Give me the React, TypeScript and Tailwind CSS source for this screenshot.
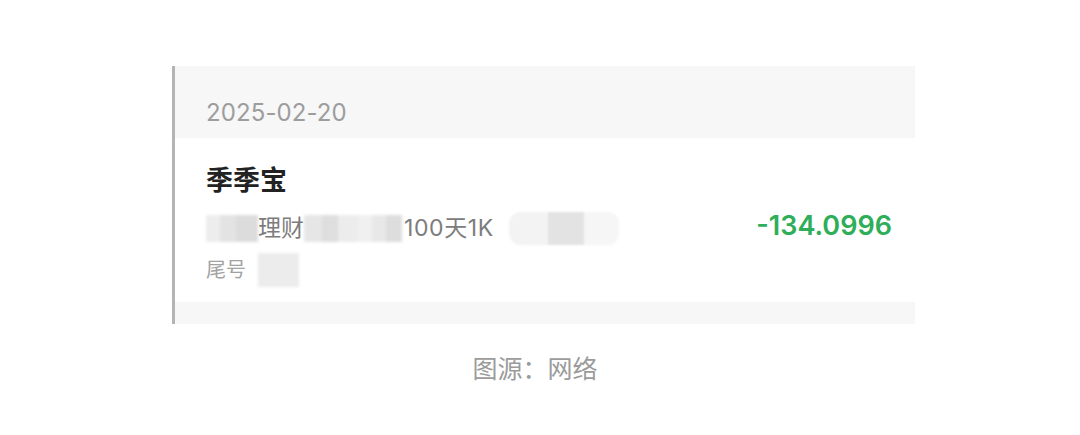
import React from 'react';

const font = { fontFamily: 'Inter, "Noto Sans CJK SC", sans-serif' };

// mosaic patches standing in for the blurred-out parts of the record
const Mosaic = ({ cells, h }: { cells: { w: number; c: string }[]; h: number }) => (
  <div className="flex blur-[1.5px]" style={{ height: h }}>
    {cells.map((cell, i) => (
      <div key={i} style={{ width: cell.w, background: cell.c }} />
    ))}
  </div>
);

export default function App() {
  return (
    <div className="w-[1080px] h-[435px] bg-white pt-[66px]" style={font}>
      <div className="ml-[172px] w-[743px] border-l-[3px] border-[#b4b4b4]">
        <div className="h-[72px] bg-[#f7f7f7] pl-[31px] flex items-center pt-[22px]">
          <span className="text-[24px] text-[#9d9d9d] tracking-[0.1px]">2025-02-20</span>
        </div>

        <div className="h-[164px] bg-white pl-[31px] pr-[23px] pt-[26px] flex">
          <div className="flex-1 flex flex-col">
            <div className="text-[27px] leading-[34px] font-bold text-[#222]">季季宝</div>
            <div className="flex items-center mt-[13px] h-[34px] text-[23px] text-[#7c7c7c]">
              <Mosaic
                h={27}
                cells={[
                  { w: 14, c: '#ededed' },
                  { w: 16, c: '#e3e3e3' },
                  { w: 22, c: '#dcdcdc' },
                ]}
              />
              <span>理财</span>
              <Mosaic
                h={27}
                cells={[
                  { w: 18, c: '#e6e6e6' },
                  { w: 16, c: '#dedede' },
                  { w: 20, c: '#ececec' },
                  { w: 14, c: '#f0f0f0' },
                  { w: 14, c: '#e8e8e8' },
                  { w: 16, c: '#dddddd' },
                ]}
              />
              <span className="ml-[2px] tracking-[0.6px]">100天1K</span>
              <div className="ml-[15px] w-[110px] h-[33px] rounded-[12px] bg-[#f3f3f3] flex overflow-hidden blur-[1px]">
                <div className="w-[39px]" />
                <div className="w-[36px] bg-[#e3e3e3]" />
                <div className="flex-1 bg-[#f6f6f6]" />
              </div>
            </div>
            <div className="flex items-center mt-[8px] text-[20px] text-[#a2a2a2]">
              <span>尾号</span>
              <div className="ml-[12px] w-[41px] h-[34px] bg-[#ececec] blur-[1.5px]" />
            </div>
          </div>
          <div className="flex items-center h-[100px] pt-[25px] text-[27px] font-semibold text-[#2eae58]">
            -134.0996
          </div>
        </div>

        <div className="h-[22px] bg-[#f7f7f7]" />
      </div>

      <div className="mt-[27px] text-center text-[25px] text-[#9b9b9b] pr-[10px]">图源：网络</div>
    </div>
  );
}
